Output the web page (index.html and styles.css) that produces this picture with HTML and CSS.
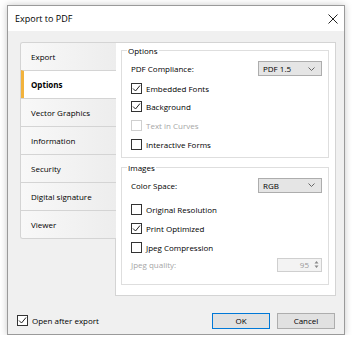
FILE: index.html
```html
<!DOCTYPE html>
<html lang="en">
<head>
    <meta charset="UTF-8">
    <title>Export to PDF</title>
    <link rel="stylesheet" href="styles.css">
</head>
<body>
    <div class="window">
        <div class="titlebar">
            <span class="title">Export to PDF</span>
            <svg class="close" width="10" height="10" viewBox="0 0 10 10">
                <path d="M0.5 0.5 L9.5 9.5 M9.5 0.5 L0.5 9.5" stroke="#222" stroke-width="1" fill="none"/>
            </svg>
        </div>
        <div class="client">
            <div class="main">
                <ul class="tabs">
                    <li class="tab">Export</li>
                    <li class="tab active">Options</li>
                    <li class="tab">Vector Graphics</li>
                    <li class="tab">Information</li>
                    <li class="tab">Security</li>
                    <li class="tab">Digital signature</li>
                    <li class="tab">Viewer</li>
                </ul>
                <div class="panel">
                    <fieldset class="group">
                        <legend>Options</legend>
                        <div class="row field">
                            <span>PDF Compliance:</span>
                            <div class="combo">PDF 1.5
                                <svg class="chevron" width="7" height="4" viewBox="0 0 7 4"><path d="M0.5 0.5 L3.5 3.5 L6.5 0.5" stroke="#666" fill="none"/></svg>
                            </div>
                        </div>
                        <div class="row check"><span class="box"><svg width="9" height="9" viewBox="0 0 9 9"><path d="M1 4.5 L3.5 7 L8 1.5" stroke="#222" fill="none"/></svg></span>Embedded Fonts</div>
                        <div class="row check"><span class="box"><svg width="9" height="9" viewBox="0 0 9 9"><path d="M1 4.5 L3.5 7 L8 1.5" stroke="#222" fill="none"/></svg></span>Background</div>
                        <div class="row check disabled"><span class="box"></span>Text in Curves</div>
                        <div class="row check"><span class="box"></span>Interactive Forms</div>
                    </fieldset>
                    <fieldset class="group images">
                        <legend>Images</legend>
                        <div class="row field">
                            <span>Color Space:</span>
                            <div class="combo">RGB
                                <svg class="chevron" width="7" height="4" viewBox="0 0 7 4"><path d="M0.5 0.5 L3.5 3.5 L6.5 0.5" stroke="#666" fill="none"/></svg>
                            </div>
                        </div>
                        <div class="checks">
                            <div class="row check"><span class="box"></span>Original Resolution</div>
                            <div class="row check"><span class="box"><svg width="9" height="9" viewBox="0 0 9 9"><path d="M1 4.5 L3.5 7 L8 1.5" stroke="#222" fill="none"/></svg></span>Print Optimized</div>
                            <div class="row check"><span class="box"></span>Jpeg Compression</div>
                        </div>
                        <div class="row quality disabled">
                            <span>Jpeg quality:</span>
                            <div class="spin">
                                <span class="spin-value">95</span>
                                <span class="spin-arrows">
                                    <svg width="5" height="9" viewBox="0 0 5 9"><path d="M2.5 1 L4.5 3.5 L0.5 3.5 Z M2.5 8 L4.5 5.5 L0.5 5.5 Z" fill="#888"/></svg>
                                </span>
                            </div>
                        </div>
                    </fieldset>
                </div>
            </div>
            <div class="footer">
                <div class="row check open"><span class="box"><svg width="9" height="9" viewBox="0 0 9 9"><path d="M1 4.5 L3.5 7 L8 1.5" stroke="#222" fill="none"/></svg></span>Open after export</div>
                <button class="btn default">OK</button>
                <button class="btn">Cancel</button>
            </div>
        </div>
    </div>
</body>
</html>
```

FILE: styles.css
```css
body {
    margin: 0;
    background: #fff;
    font-family: "Open Sans", "Noto Sans", sans-serif;
    font-size: 8px;
    color: #000;
}
.window {
    margin: 5px 0 0 7px;
    width: 338px;
    height: 330px;
    box-sizing: border-box;
    border: 1px solid #9a9a9a;
    box-shadow: 0 0 7px rgba(0, 0, 0, 0.22);
    display: flex;
    flex-direction: column;
}
.titlebar {
    height: 25px;
    background: #fff;
    display: flex;
    align-items: center;
    padding: 0 6px 0 7px;
}
.title {
    font-size: 9px;
    flex: 1;
}
.close {
    margin-top: 1px;
}
.client {
    flex: 1;
    background: #f0f0f0;
    padding: 11px 8px 0 12px;
    display: flex;
    flex-direction: column;
}
.main {
    display: flex;
    height: 254px;
}
.tabs {
    list-style: none;
    margin: 0;
    padding: 0;
    width: 95px;
    align-self: flex-start;
    border: 1px solid #d4d4d4;
    border-right: none;
    border-radius: 3px 0 0 3px;
    overflow: hidden;
    position: relative;
    z-index: 1;
}
.tab {
    height: 27px;
    line-height: 27px;
    padding-left: 10px;
    border-top: 1px solid #d4d4d4;
    background: linear-gradient(to right, #f8f8f8, #ededed);
}
.tab:first-child {
    border-top: none;
}
.tab.active {
    background: #fff;
    font-weight: bold;
    border-left: 3px solid #f2b33d;
    padding-left: 7px;
    margin-right: -1px;
}
.panel {
    flex: 1;
    background: #fff;
    border: 1px solid #d4d4d4;
    margin-left: -1px;
    padding: 2px 6px 10px 5px;
}
.group {
    margin: 0;
    padding: 2px 6px 3px 9px;
    border: 1px solid #dedede;
    min-width: 0;
}
.group legend {
    padding: 0 1px;
    margin-left: -4px;
    line-height: 11px;
}
.group.images {
    margin-top: 4px;
    padding-bottom: 11px;
}
.row {
    display: flex;
    align-items: center;
}
.row.field {
    height: 21px;
}
.row.check {
    height: 18.67px;
}
.checks {
    margin-top: 5px;
}
.box {
    width: 11px;
    height: 11px;
    box-sizing: border-box;
    border: 1px solid #333;
    background: #fff;
    margin-right: 4px;
    display: flex;
    align-items: center;
    justify-content: center;
}
.disabled {
    color: #a6a6a6;
}
.disabled .box {
    border-color: #cfcfcf;
}
.combo {
    margin-left: auto;
    width: 64px;
    height: 15px;
    box-sizing: border-box;
    background: #e5e5e5;
    border: 1px solid #adadad;
    padding: 0 6px 0 4px;
    display: flex;
    align-items: center;
    justify-content: space-between;
}
.row.quality {
    height: 16px;
}
.spin {
    margin-left: auto;
    width: 45px;
    height: 14px;
    box-sizing: border-box;
    background: #f3f3f3;
    border: 1px solid #cfcfcf;
    display: flex;
    align-items: center;
}
.spin-value {
    flex: 1;
    text-align: right;
    padding-right: 3px;
    color: #999;
}
.spin-arrows {
    width: 8px;
    display: flex;
    justify-content: center;
    margin-right: 1px;
}
.footer {
    flex: 1;
    display: flex;
    align-items: center;
    padding-top: 11px;
    gap: 7px;
}
.open {
    margin-left: -3px;
    margin-right: auto;
}
.btn {
    width: 58px;
    height: 16px;
    background: #e1e1e1;
    border: 1px solid #adadad;
    font-family: "Open Sans", "Noto Sans", sans-serif;
    font-size: 8px;
    color: #000;
    padding: 0;
    margin-right: 1px;
}
.btn.default {
    border-color: #0078d7;
    margin-right: 0;
}
```
